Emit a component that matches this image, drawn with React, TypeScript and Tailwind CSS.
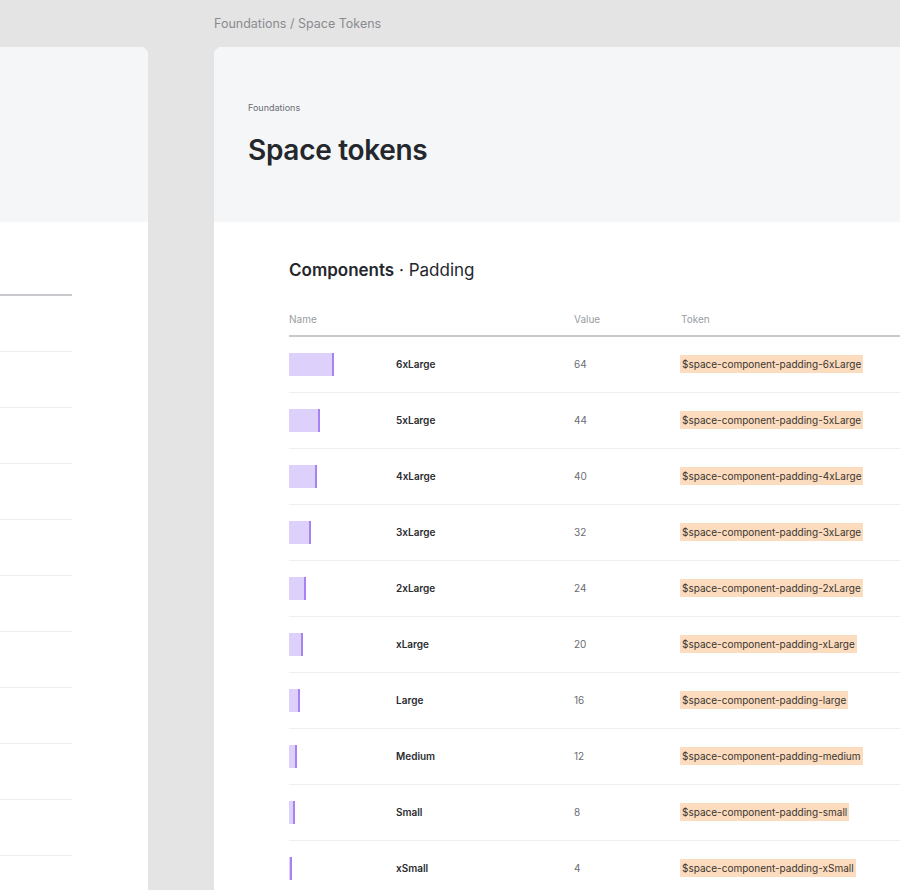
const rows = [
  ["6xLarge", 64, "6xLarge"],
  ["5xLarge", 44, "5xLarge"],
  ["4xLarge", 40, "4xLarge"],
  ["3xLarge", 32, "3xLarge"],
  ["2xLarge", 24, "2xLarge"],
  ["xLarge", 20, "xLarge"],
  ["Large", 16, "large"],
  ["Medium", 12, "medium"],
  ["Small", 8, "small"],
  ["xSmall", 4, "xSmall"],
] as const;

export default function App() {
  return (
    <div className="w-[900px] h-[890px] overflow-hidden bg-[#e4e4e4] flex gap-[66px] relative" style={{ fontFamily: "Inter, 'Noto Sans', sans-serif" }}>
      <div className="w-[148px] shrink-0 mt-[47px] bg-white rounded-tr-lg overflow-hidden">
        <div className="h-[175px] bg-[#f5f6f8]" />
        <div className="w-[72px] mt-[72px] h-[2px] bg-[#c8c9cc]" />
        {Array.from({ length: 10 }).map((_, i) => (
          <div key={i} className="w-[72px] h-[56px] border-b border-[#eeeeef]" />
        ))}
      </div>
      <div className="flex-1 flex flex-col min-w-0">
        <div className="h-[47px] flex items-center text-[12.5px] text-[#8a8b8f] pt-[1px]">Foundations / Space Tokens</div>
        <div className="flex-1 bg-white rounded-tl-lg overflow-hidden">
          <div className="h-[175px] bg-[#f5f6f8] px-[34px] pt-[54px]">
            <div className="text-[9px] text-[#6b6d72]">Foundations</div>
            <div className="text-[28px] font-semibold text-[#24272c] mt-[14px] tracking-[-0.3px]">Space tokens</div>
          </div>
          <div className="pl-[75px] pt-[36px]">
            <div className="text-[17px] text-[#24272c]"><span className="font-semibold">Components</span> · Padding</div>
            <div className="mt-[25px] flex text-[10px] text-[#9a9ca0] h-[28px] items-start pt-[3px] border-b-2 border-[#c8c9cc] w-[700px]">
              <div className="w-[285px]">Name</div>
              <div className="w-[107px]">Value</div>
              <div>Token</div>
            </div>
            {rows.map(([name, v, tok]) => (
              <div key={name} className="flex items-center h-[56px] border-b border-[#efeff0] w-[700px] text-[10px]">
                <div className="w-[107px] flex items-center">
                  <div className="h-[23px] bg-[#ddd0fb] border-r-2 border-[#a982f2]" style={{ width: Math.round(v * 0.7) }} />
                </div>
                <div className="w-[178px] font-semibold text-[#2a2c30]">{name}</div>
                <div className="w-[106px] text-[#6b6d72]">{v}</div>
                <div><span className="bg-[#fbdcbf] text-[#3a3530] px-[2px] py-[3px]">$space-component-padding-{tok}</span></div>
              </div>
            ))}
          </div>
        </div>
      </div>
    </div>
  );
}
